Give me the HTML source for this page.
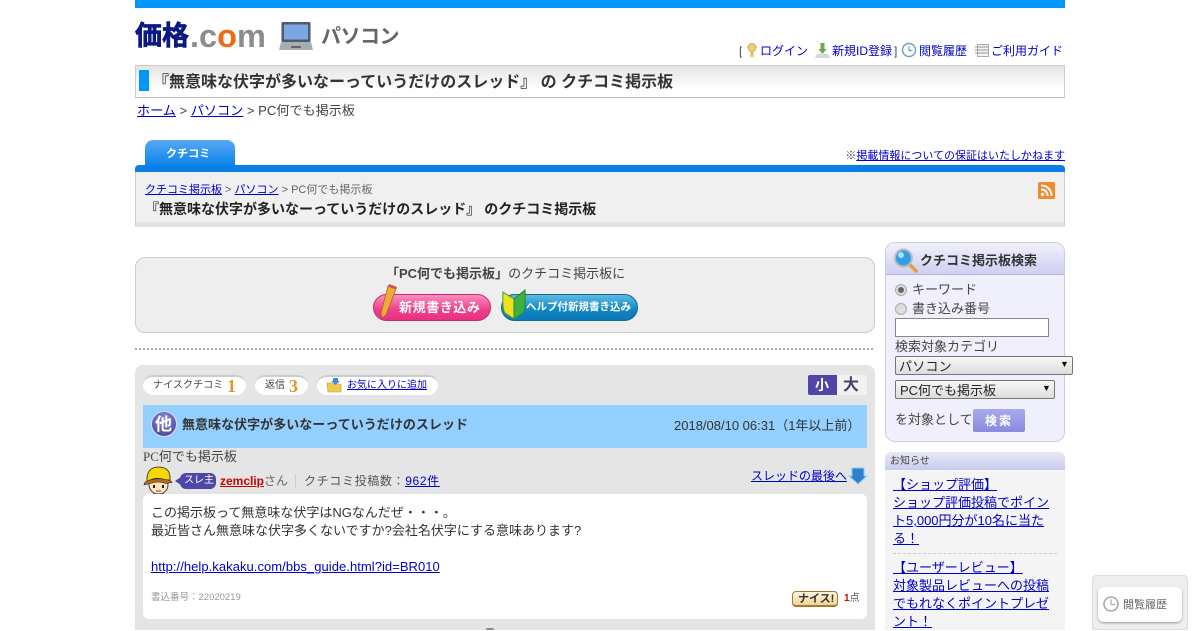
<!DOCTYPE html>
<html lang="ja"><head><meta charset="utf-8"><title>クチコミ掲示板</title>
<style>
html,body{margin:0;padding:0;background:#fff}
body{width:1200px;height:630px;overflow:hidden;position:relative;font-family:"Liberation Sans","WenQuanYi Zen Hei","Noto Sans CJK JP",sans-serif;color:#333;font-size:13px}
.a{position:absolute;white-space:nowrap;line-height:1}
.b{position:absolute;box-sizing:border-box}
a{color:#00c;text-decoration:underline}
svg{position:absolute;overflow:visible}
</style></head><body>
<div class="b" style="left:135px;top:0;width:930px;height:8px;background:#0097fb"></div>

<div class="a" style="left:135px;top:22px;font-size:27px;font-weight:bold;color:#0a1a80;line-height:28px;-webkit-text-stroke:.7px #0a1a80">価格</div>
<div class="a" style="left:190px;top:22px;font-size:32.500px;font-weight:bold;color:#8c8c8c;line-height:28px">.c<span style="color:#f26a10">o</span>m</div>
<svg style="left:279px;top:21px" width="34" height="30" viewBox="0 0 34 30"><rect x="2.500" y="1" width="29" height="20" rx="1" fill="#4a5e70"/><rect x="5" y="3.500" width="24" height="15" fill="#7ea6e4"/><path d="M2 21h30l2 8H0z" fill="#a8adb2"/><rect x="12" y="25" width="10" height="2" fill="#666"/></svg>
<div class="a" style="left:321px;top:24px;font-size:20px;font-weight:bold;color:#666;line-height:26px;letter-spacing:-.5px">パソコン</div>

<div class="a" style="left:739px;top:44px;font-size:12px;color:#444;line-height:14px">[</div>
<svg style="left:745px;top:43px" width="14" height="15" viewBox="0 0 14 15"><circle cx="7" cy="4.500" r="4" fill="#ead27a" stroke="#c8aa40"/><rect x="5.500" y="8" width="3" height="6" fill="#e0c060"/></svg>
<a class="a" href="#" style="left:760px;top:44px;font-size:12px;line-height:14px;text-decoration:none">ログイン</a>
<svg style="left:815px;top:43px" width="15" height="15" viewBox="0 0 15 15"><path d="M5.500 0h4v6h2L7.500 11 3.500 6h2z" fill="#6aa84c"/><path d="M0 15l2-4h11l2 4z" fill="#d4d8dc"/></svg>
<a class="a" href="#" style="left:832px;top:44px;font-size:12px;line-height:14px;text-decoration:none">新規ID登録</a>
<div class="a" style="left:894px;top:44px;font-size:12px;color:#444;line-height:14px">]</div>
<svg style="left:901px;top:42px" width="17" height="16" viewBox="0 0 17 16"><circle cx="8" cy="8" r="6.500" fill="#fff" stroke="#6ba6c0" stroke-width="1.500"/><path d="M8 4v4.500h3.500" fill="none" stroke="#6ba6c0" stroke-width="1.200"/></svg>
<a class="a" href="#" style="left:919px;top:44px;font-size:12px;line-height:14px;text-decoration:none">閲覧履歴</a>
<svg style="left:975px;top:43px" width="15" height="15" viewBox="0 0 15 15"><rect x="2.500" y="1.500" width="11" height="12" fill="#f4f4f0" stroke="#aaa"/><path d="M0 4h13M0 7h13M0 10h13" stroke="#999"/></svg>
<a class="a" href="#" style="left:991px;top:44px;font-size:12px;line-height:14px;text-decoration:none">ご利用ガイド</a>

<div class="b" style="left:135px;top:65px;width:930px;height:33px;border:1px solid #ccc;border-bottom-color:#bbb;background:linear-gradient(#e4e4e4,#fff 75%)"></div>
<div class="b" style="left:139px;top:70px;width:10px;height:21px;background:#0097fb"></div>
<div class="a" style="left:153px;top:73px;font-size:16px;font-weight:bold;color:#333;line-height:20px">『無意味な伏字が多いなーっていうだけのスレッド』 の クチコミ掲示板</div>

<div class="a" style="left:137px;top:103px;font-size:13.100px;line-height:16px;color:#444"><a href="#">ホーム</a> &gt; <a href="#">パソコン</a> &gt; PC何でも掲示板</div>

<div class="b" style="left:145px;top:140px;width:90px;height:26px;border-radius:8px 8px 0 0;background:linear-gradient(#57a8f3,#0a84ea)"></div>
<div class="a" style="left:166px;top:147px;font-size:11px;font-weight:bold;color:#fff;line-height:14px;letter-spacing:.1px">クチコミ</div>
<div class="a" style="right:135px;top:149px;font-size:11px;line-height:15px;color:#444">※<a href="#">掲載情報についての保証はいたしかねます</a></div>
<div class="b" style="left:135px;top:165px;width:930px;height:62px;background:#f0f0f0;border:1px solid #ccc;border-top:0;border-bottom:5px solid #e2e2e2;border-radius:4px 4px 0 0"></div>
<div class="b" style="left:135px;top:165px;width:930px;height:7px;background:#0a7fe6;border-radius:4px 4px 0 0"></div>
<div class="a" style="left:145px;top:183px;font-size:11px;line-height:15px;color:#666"><a href="#">クチコミ掲示板</a> &gt; <a href="#">パソコン</a> &gt; PC何でも掲示板</div>
<div class="a" style="left:145px;top:201px;font-size:14px;font-weight:bold;color:#222;line-height:17px">『無意味な伏字が多いなーっていうだけのスレッド』 のクチコミ掲示板</div>
<svg style="left:1038px;top:182px" width="17" height="17" viewBox="0 0 17 17"><rect width="17" height="17" rx="2" fill="#f08a2c"/><circle cx="4.500" cy="12.500" r="1.700" fill="#fff"/><path d="M3 7.500a6 6 0 0 1 6.500 6.500M3 3.500a10 10 0 0 1 10.500 10.500" fill="none" stroke="#fff" stroke-width="2"/></svg>

<div class="b" style="left:135px;top:257px;width:740px;height:76px;background:#eee;border:1px solid #ccc;border-radius:10px"></div>
<div class="a" style="left:386px;top:266px;font-size:13px;line-height:16px;color:#444"><b>「PC何でも掲示板」</b>のクチコミ掲示板に</div>
<div class="b" style="left:373px;top:294px;width:118px;height:27px;border-radius:14px;background:linear-gradient(#f98fbc,#ef3f8c 60%,#e8307e);border:1px solid #c92a70"></div>
<div class="a" style="left:399px;top:300px;font-size:13px;font-weight:bold;color:#fff;line-height:15px;letter-spacing:.6px">新規書き込み</div>
<svg style="left:380px;top:283px" width="22" height="36" viewBox="0 0 22 36"><path d="M8 3l8 3-10 26-4 3-1-5z" fill="#f2a93b" stroke="#a5651a" stroke-width=".8"/><path d="M8 3.500l1-2.500 8 3-1 2.500z" fill="#c9545b"/></svg>
<div class="b" style="left:501px;top:294px;width:137px;height:27px;border-radius:14px;background:linear-gradient(#5fbae0,#0f86c4 60%,#0a78b4);border:1px solid #0c6a9c"></div>
<div class="a" style="left:526px;top:300px;font-size:10.500px;font-weight:bold;color:#fff;line-height:15px">ヘルプ付新規書き込み</div>
<svg style="left:502px;top:289px" width="26" height="31" viewBox="0 0 26 31"><path d="M1 3l11 7v20L3 24Q0 20 1 3z" fill="#f0e020" stroke="#4a9a30"/><path d="M23 1L12 10v20l9-6q3-5 2-23z" fill="#3cb040" stroke="#2a8a30"/></svg>

<div class="b" style="left:135px;top:348px;width:740px;height:2px;background:repeating-linear-gradient(90deg,#aaa 0 2px,transparent 2px 4px)"></div>

<div class="b" style="left:135px;top:365px;width:740px;height:265px;background:#e5e5e5;border-radius:8px 8px 0 0"></div>
<div class="b" style="left:143px;top:375px;width:103px;height:20px;background:#fff;border-radius:10px;border-top:2px solid #ccc"></div>
<div class="a" style="left:153px;top:380px;font-size:10px;line-height:12px;color:#444;letter-spacing:.1px">ナイスクチコミ</div>
<div class="a" style="left:227px;top:376px;font-family:'Liberation Serif',serif;font-size:18px;font-weight:bold;color:#e8912a;line-height:20px">1</div>
<div class="b" style="left:255px;top:375px;width:53px;height:20px;background:#fff;border-radius:10px;border-top:2px solid #ccc"></div>
<div class="a" style="left:265px;top:380px;font-size:10px;line-height:12px;color:#444">返信</div>
<div class="a" style="left:289px;top:376px;font-family:'Liberation Serif',serif;font-size:18px;font-weight:bold;color:#e8912a;line-height:20px">3</div>
<div class="b" style="left:317px;top:375px;width:121px;height:20px;background:#fff;border-radius:10px;border-top:2px solid #ccc"></div>
<svg style="left:327px;top:378px" width="16" height="16" viewBox="0 0 16 16"><path d="M0 5h5l1 1h8v8H1z" fill="#f2c94c" stroke="#c79a20" stroke-width=".6"/><path d="M6 0h5v3h2l-4.500 4L4 3h2z" fill="#3e8fd0"/></svg>
<a class="a" href="#" style="left:347px;top:380px;font-size:10px;line-height:12px">お気に入りに追加</a>
<div class="b" style="left:808px;top:375px;width:29px;height:20px;background:#4f46a8;border-radius:2px 0 0 2px"></div>
<div class="a" style="left:815px;top:378px;font-size:14px;font-weight:bold;color:#fff;line-height:15px">小</div>
<div class="b" style="left:837px;top:375px;width:30px;height:20px;background:#f2f2f2;border-radius:0 2px 2px 0"></div>
<div class="a" style="left:843px;top:377px;font-size:16px;font-weight:bold;color:#4a4270;line-height:17px">大</div>

<div class="b" style="left:143px;top:405px;width:724px;height:43px;background:#94d0ff"></div>
<div class="b" style="left:151px;top:411px;width:26px;height:26px;border-radius:50%;background:radial-gradient(circle at 50% 30%,#8f8cd6,#3b3b96);border:1px solid #dde"></div>
<div class="a" style="left:155px;top:416px;font-size:17px;font-weight:bold;color:#fff;line-height:18px">他</div>
<div class="a" style="left:182px;top:416px;font-size:13px;font-weight:bold;color:#333;line-height:17px;letter-spacing:.03px">無意味な伏字が多いなーっていうだけのスレッド</div>
<div class="a" style="left:674px;top:418px;font-size:13px;color:#333;line-height:16px">2018/08/10 06:31（1年以上前）</div>

<div class="a" style="left:143px;top:449px;font-family:'Liberation Serif','WenQuanYi Zen Hei',serif;font-size:13px;line-height:16px;color:#444">PC何でも掲示板</div>

<svg style="left:143px;top:466px" width="31" height="33" viewBox="0 0 31 33"><path d="M9 33l2-6h9l2 6z" fill="#f5d800" stroke="#222" stroke-width=".7"/><ellipse cx="15.500" cy="19" rx="9.500" ry="9" fill="#ffe2c0" stroke="#222" stroke-width=".8"/><path d="M4 16Q3 1 15.500 1T27 14L22 14Q12 10 4 16z" fill="#f5d800" stroke="#222" stroke-width=".8"/><path d="M1 19q0-4 6-5 8-2 16-.5 6 1 6 3l-6 1q-8-3-16 0z" fill="#b36a20" stroke="#222" stroke-width=".6"/><rect x="10" y="19" width="2" height="3" fill="#222"/><rect x="19" y="19" width="2" height="3" fill="#222"/><path d="M13 25h5" stroke="#a33" stroke-width="1"/></svg>
<div class="b" style="left:180px;top:473px;width:36px;height:16px;background:#4f46a8;border-radius:6px"></div>
<svg style="left:175px;top:477px" width="6" height="8" viewBox="0 0 6 8"><path d="M6 0v8L0 4z" fill="#4f46a8"/></svg>
<div class="a" style="left:184px;top:475px;font-size:10px;color:#fff;line-height:12px">スレ主</div>
<a class="a" href="#" style="left:220px;top:473px;font-size:12px;font-weight:bold;color:#c00;line-height:16px">zemclip</a>
<div class="a" style="left:264px;top:473px;font-size:12px;color:#666;line-height:16px">さん</div>
<div class="b" style="left:295px;top:474px;width:1px;height:14px;background:#ccc"></div>
<div class="a" style="left:304px;top:473px;font-size:12px;color:#555;line-height:16px;letter-spacing:.65px">クチコミ投稿数：<a href="#">962件</a></div>
<a class="a" href="#" style="left:751px;top:469px;font-size:12px;line-height:15px">スレッドの最後へ</a>
<svg style="left:849px;top:467px" width="18" height="18" viewBox="0 0 18 18"><path d="M3 1h12v8h3l-9 8-9-8h3z" fill="#2f7fcf" stroke="#8fd0f0"/></svg>

<div class="b" style="left:143px;top:494px;width:724px;height:125px;background:#fff;border-radius:6px"></div>
<div class="a" style="left:151px;top:504px;font-size:13px;line-height:18px;color:#333;white-space:normal;width:700px">この掲示板って無意味な伏字はNGなんだぜ・・・。<br>最近皆さん無意味な伏字多くないですか?会社名伏字にする意味あります?<br><br><a href="#" style="letter-spacing:.05px">http://help.kakaku.com/bbs_guide.html?id=BR010</a></div>
<div class="a" style="left:151px;top:592px;font-size:9.500px;line-height:12px;color:#999">書込番号：22020219</div>
<div class="b" style="left:792px;top:591px;width:46px;height:16px;border-radius:4px;background:linear-gradient(#fdf6dc,#f0d498);border:1px solid #a57a30;border-bottom-width:2px"></div>
<div class="a" style="left:798px;top:593px;font-size:11px;font-weight:bold;color:#333;line-height:12px">ナイス!</div>
<div class="a" style="left:844px;top:593px;font-size:10px;color:#555;line-height:12px"><b style="color:#d00">1</b>点</div>
<div class="b" style="left:486px;top:628px;width:8px;height:2px;background:#888;border-radius:3px 3px 0 0"></div>

<div class="b" style="left:885px;top:242px;width:180px;height:200px;background:#f0f0fc;border:1px solid #ccccdc;border-radius:10px"></div>
<div class="b" style="left:886px;top:243px;width:178px;height:32px;background:linear-gradient(#f1f1fb,#cfcff2);border-bottom:1px solid #b8b8e0;border-radius:9px 9px 0 0"></div>
<svg style="left:894px;top:248px" width="24" height="25" viewBox="0 0 24 25"><path d="M14 15l8 8" stroke="#e2a13a" stroke-width="3.500" stroke-linecap="round"/><circle cx="9.500" cy="10" r="8.500" fill="#2f9fe8" stroke="#bbb" stroke-width="2"/><circle cx="7" cy="7" r="3" fill="#a8e0fa"/></svg>
<div class="a" style="left:920px;top:253px;font-size:13px;font-weight:bold;color:#333;line-height:16px">クチコミ掲示板検索</div>
<svg style="left:895px;top:284px" width="12" height="12" viewBox="0 0 12 12"><circle cx="6" cy="6" r="5.500" fill="#ddd" stroke="#aaa"/><circle cx="6" cy="6" r="3" fill="#666"/></svg>
<div class="a" style="left:912px;top:282px;font-size:13px;color:#444;line-height:16px">キーワード</div>
<svg style="left:895px;top:303px" width="12" height="12" viewBox="0 0 12 12"><circle cx="6" cy="6" r="5.500" fill="#ddd" stroke="#aaa"/></svg>
<div class="a" style="left:912px;top:301px;font-size:13px;color:#444;line-height:16px">書き込み番号</div>
<div class="b" style="left:895px;top:318px;width:154px;height:19px;background:#fff;border:1px solid #888"></div>
<div class="a" style="left:895px;top:339px;font-size:13px;color:#444;line-height:16px">検索対象カテゴリ</div>
<div class="b" style="left:895px;top:356px;width:178px;height:19px;background:linear-gradient(#f8f8f8,#ddd);border:1px solid #777;border-radius:2px"></div>
<div class="a" style="left:899px;top:359px;font-size:13px;color:#222;line-height:16px;letter-spacing:.2px">パソコン</div>
<div class="a" style="left:1060px;top:359px;font-size:9px;color:#111;line-height:11px">▼</div>
<div class="b" style="left:895px;top:380px;width:160px;height:19px;background:linear-gradient(#f8f8f8,#ddd);border:1px solid #777;border-radius:2px"></div>
<div class="a" style="left:900px;top:383px;font-size:13px;color:#222;line-height:16px">PC何でも掲示板</div>
<div class="a" style="left:1042px;top:383px;font-size:9px;color:#111;line-height:11px">▼</div>
<div class="a" style="left:895px;top:412px;font-size:13px;color:#444;line-height:16px">を対象として</div>
<div class="b" style="left:973px;top:409px;width:52px;height:23px;background:linear-gradient(#a9a9ee,#8a8ade);border-radius:2px"></div>
<div class="a" style="left:985px;top:414px;font-size:12px;font-weight:bold;color:#fff;line-height:14px;letter-spacing:2px">検索</div>

<div class="b" style="left:885px;top:452px;width:180px;height:178px;background:#f4f4f4;border-radius:6px 6px 0 0"></div>
<div class="b" style="left:885px;top:452px;width:180px;height:18px;background:linear-gradient(#e8e8f4,#c8ccee);border-radius:6px 6px 0 0"></div>
<div class="a" style="left:890px;top:456px;font-size:10px;color:#444;line-height:12px">お知らせ</div>
<div class="a" style="left:893px;top:476px;width:164px;white-space:normal;font-size:13px;line-height:18px"><a href="#">【ショップ評価】<br>ショップ評価投稿でポイント5,000円分が10名に当たる！</a></div>
<div class="b" style="left:893px;top:553px;width:164px;height:1px;border-top:1px dashed #ccc"></div>
<div class="a" style="left:893px;top:559px;width:164px;white-space:normal;font-size:13px;line-height:18px"><a href="#">【ユーザーレビュー】<br>対象製品レビューへの投稿でもれなくポイントプレゼント！</a></div>

<div class="b" style="left:1092px;top:575px;width:96px;height:55px;background:#eee;border:1px solid #ddd;border-radius:4px 4px 0 0"></div>
<div class="b" style="left:1098px;top:587px;width:84px;height:35px;background:#fff;border-radius:6px;box-shadow:0 1px 2px #999"></div>
<svg style="left:1102px;top:595px" width="18" height="18" viewBox="0 0 18 18"><circle cx="9" cy="9" r="7" fill="#fff" stroke="#aaa" stroke-width="1.600"/><path d="M9 4.500V9.500h4" fill="none" stroke="#aaa" stroke-width="1.200"/></svg>
<div class="a" style="left:1123px;top:598px;font-size:11px;color:#666;line-height:14px">閲覧履歴</div>
</body></html>
